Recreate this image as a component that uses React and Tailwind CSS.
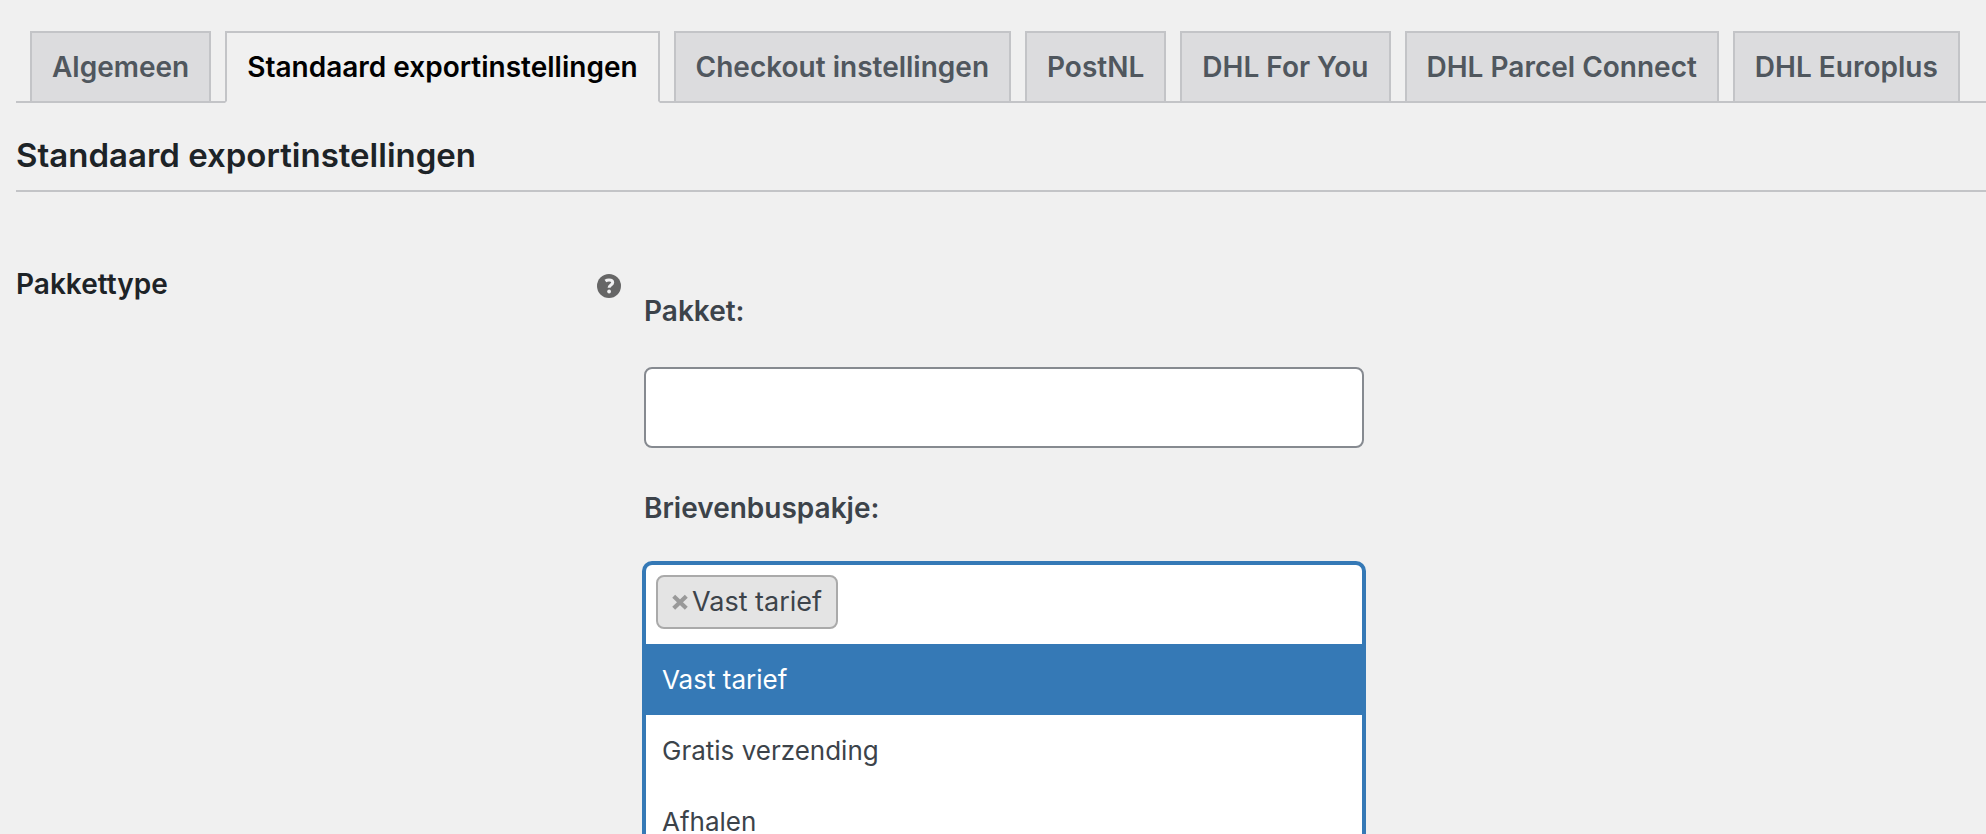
import { useState } from "react";

const tabs = [
  "Algemeen",
  "Standaard exportinstellingen",
  "Checkout instellingen",
  "PostNL",
  "DHL For You",
  "DHL Parcel Connect",
  "DHL Europlus",
];

const options = ["Vast tarief", "Gratis verzending", "Afhalen"];

function HelpIcon() {
  return (
    <svg viewBox="0 0 24 24" className="size-6" aria-hidden="true">
      <circle cx="12" cy="12" r="12" fill="#666" />
      <path
        d="M8.4 7C9.500 6.200 10.700 5.900 12 5.900c2.200 0 3.700.900 3.700 2.600 0 2.600-3.600 2.500-3.600 5.300"
        fill="none"
        stroke="#f0f0f1"
        strokeWidth="3"
      />
      <circle cx="12.100" cy="17.500" r="1.900" fill="#f0f0f1" />
    </svg>
  );
}

function RemoveIcon() {
  return (
    <svg viewBox="0 0 16 16" className="size-4" aria-hidden="true">
      <path d="M1.700 2.300 14.300 14.300M14.300 2.300 1.700 14.300" fill="none" stroke="#999" strokeWidth="4.200" />
    </svg>
  );
}

function Tab({ label, active, onSelect }) {
  return (
    <button
      type="button"
      role="tab"
      aria-selected={active}
      onClick={onSelect}
      className={
        "-mb-0.5 shrink-0 whitespace-nowrap border-2 border-[#c3c4c7] px-5 py-2.5 text-[28px] leading-12 font-semibold " +
        (active ? "border-b-[#f0f0f0] bg-[#f0f0f0] text-black" : "bg-[#dcdcde] text-[#50575e]")
      }
    >
      {label}
    </button>
  );
}

export default function App() {
  const [activeTab, setActiveTab] = useState(1);
  const [highlighted, setHighlighted] = useState(0);

  return (
    <main className="h-screen overflow-hidden bg-[#f0f0f0] pt-[31px] pl-4 font-['Inter','Liberation_Sans',sans-serif] text-[#3c434a]">
      <div role="tablist" className="flex gap-3.5 border-b-2 border-[#c3c4c7] pl-3.5">
        {tabs.map((label, i) => (
          <Tab key={label} label={label} active={i === activeTab} onSelect={() => setActiveTab(i)} />
        ))}
      </div>

      <h2 className="mt-8 border-b-2 border-[#c3c4c7] pb-[15px] text-[33px] leading-10 font-semibold text-[#1d2327]">
        Standaard exportinstellingen
      </h2>

      <div className="grid grid-cols-[581px_1fr] pt-[72px]">
        <h3 className="text-[28px] leading-10 font-semibold text-[#1d2327]">Pakkettype</h3>

        <div className="flex gap-[23px]">
          <button type="button" aria-label="Help" className="mt-2.5 size-6 shrink-0">
            <HelpIcon />
          </button>

          <div className="w-[720px] pt-[27px]">
            <label htmlFor="pakket" className="block text-[28px] leading-10 font-semibold">
              Pakket:
            </label>
            <input
              id="pakket"
              type="text"
              className="mt-9 block h-[81px] w-full rounded-lg border-2 border-[#868a90] bg-white px-4 text-[28px] outline-none"
            />

            <label htmlFor="brievenbuspakje" className="mt-10 block text-[28px] leading-10 font-semibold">
              Brievenbuspakje:
            </label>
            <div className="-mx-0.5 mt-[33px] rounded-t-[10px] border-4 border-b-0 border-[#3579b6] bg-white">
              <div className="flex h-[79px] items-start gap-2.5 px-2.5 pt-2.5">
                <span className="flex h-[54px] shrink-0 items-center gap-1 rounded-lg border-2 border-[#aaa] bg-[#e4e4e4] px-3.5 text-[27px] leading-10">
                  <button type="button" aria-label="Vast tarief verwijderen">
                    <RemoveIcon />
                  </button>
                  Vast tarief
                </span>
                <input
                  id="brievenbuspakje"
                  type="text"
                  role="combobox"
                  aria-expanded="true"
                  aria-controls="verzendmethoden"
                  className="h-[54px] min-w-0 flex-1 bg-transparent text-[27px] outline-none"
                />
              </div>
              <ul id="verzendmethoden" role="listbox" className="text-[26px] leading-[71px]">
                {options.map((label, i) => (
                  <li
                    key={label}
                    role="option"
                    aria-selected={i === 0}
                    onMouseEnter={() => setHighlighted(i)}
                    className={"px-4 " + (i === highlighted ? "bg-[#3579b6] text-white" : "")}
                  >
                    {label}
                  </li>
                ))}
              </ul>
            </div>
          </div>
        </div>
      </div>
    </main>
  );
}
